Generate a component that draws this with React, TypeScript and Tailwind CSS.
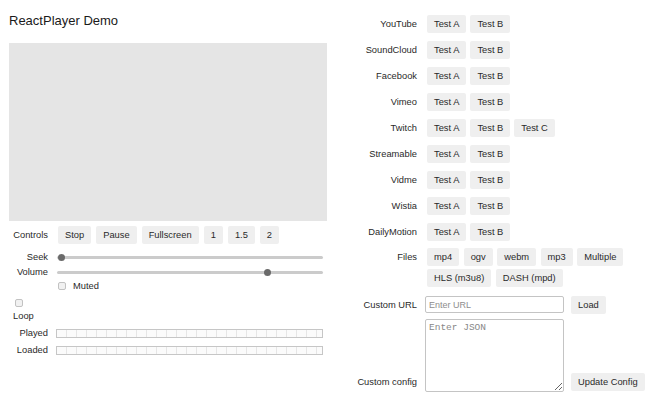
import React from 'react';

const providers: { name: string; tests: string[] }[] = [
  { name: 'YouTube', tests: ['Test A', 'Test B'] },
  { name: 'SoundCloud', tests: ['Test A', 'Test B'] },
  { name: 'Facebook', tests: ['Test A', 'Test B'] },
  { name: 'Vimeo', tests: ['Test A', 'Test B'] },
  { name: 'Twitch', tests: ['Test A', 'Test B', 'Test C'] },
  { name: 'Streamable', tests: ['Test A', 'Test B'] },
  { name: 'Vidme', tests: ['Test A', 'Test B'] },
  { name: 'Wistia', tests: ['Test A', 'Test B'] },
  { name: 'DailyMotion', tests: ['Test A', 'Test B'] },
];

const files = ['mp4', 'ogv', 'webm', 'mp3', 'Multiple', 'HLS (m3u8)', 'DASH (mpd)'];

function Btn({ children }: { children: React.ReactNode }) {
  return (
    <button className="h-[18px] px-[7px] rounded-[2px] bg-[#efefef] text-[#2a2a2a] text-[9.33px] leading-[18px] whitespace-nowrap">
      {children}
    </button>
  );
}

function Checkbox() {
  return <span className="block w-[8px] h-[8px] rounded-[2px] border border-[#c2c2c2] bg-[#f1f1f1]" />;
}

function Slider({ value }: { value: number }) {
  return (
    <div className="relative w-[266px] h-[7px] flex items-center">
      <div className="w-full h-[3px] rounded-full bg-[#cbcbcb]" />
      <span
        className="absolute top-0 w-[7px] h-[7px] rounded-full bg-[#6a6a6a]"
        style={{ left: `${1 + value * 257}px` }}
      />
    </div>
  );
}

function Progress() {
  return (
    <div className="w-[267px] h-[9px] border border-[#c6c6c6] bg-[repeating-linear-gradient(90deg,#fbfbfb_0px,#fbfbfb_9px,#e6e6e6_9px,#e6e6e6_10px)]" />
  );
}

function LeftLabel({ children }: { children: React.ReactNode }) {
  return <div className="w-[39px] shrink-0 text-right">{children}</div>;
}

export default function App() {
  return (
    <div className="w-[654px] h-[405px] bg-white flex pl-[9px] font-['Liberation_Sans',Arial,sans-serif] text-[9.33px] text-[#2a2a2a] leading-[12px]">
      <section className="w-[318px] shrink-0">
        <h1 className="pt-[13px] h-[43px] text-[13px] leading-[15px] text-[#1a1a1a]">ReactPlayer Demo</h1>
        <div className="h-[178px] bg-[#e5e5e5]" />

        <div className="mt-[5px] h-[18px] flex items-center gap-[9px]">
          <LeftLabel>Controls</LeftLabel>
          <div className="flex gap-[5px] ml-[1px]">
            <Btn>Stop</Btn>
            <Btn>Pause</Btn>
            <Btn>Fullscreen</Btn>
            <Btn>1</Btn>
            <Btn>1.5</Btn>
            <Btn>2</Btn>
          </div>
        </div>

        <div className="mt-[6px] h-[14px] flex items-center gap-[9px]">
          <LeftLabel>Seek</LeftLabel>
          <Slider value={0} />
        </div>
        <div className="h-[16px] flex items-center gap-[9px]">
          <LeftLabel>Volume</LeftLabel>
          <Slider value={0.8} />
        </div>
        <div className="h-[12px] flex items-center gap-[7px] pl-[49px]">
          <Checkbox />
          <span>Muted</span>
        </div>

        <div className="mt-[7px] ml-[6px]">
          <Checkbox />
        </div>
        <div className="mt-[3px] pl-[4px] leading-[12px]">Loop</div>

        <div className="mt-[4px] h-[14px] flex items-center gap-[8px]">
          <LeftLabel>Played</LeftLabel>
          <Progress />
        </div>
        <div className="mt-[3px] h-[14px] flex items-center gap-[8px]">
          <LeftLabel>Loaded</LeftLabel>
          <Progress />
        </div>
      </section>

      <section className="ml-[28px] pt-[15px] flex flex-col">
        <div className="flex flex-col gap-[8px]">
          {providers.map((p) => (
            <div key={p.name} className="h-[18px] flex items-center gap-[10px]">
              <div className="w-[62px] text-right">{p.name}</div>
              <div className="flex gap-[4px]">
                {p.tests.map((t) => (
                  <Btn key={t}>{t}</Btn>
                ))}
              </div>
            </div>
          ))}
        </div>

        <div className="mt-[7px] flex items-start gap-[10px]">
          <div className="w-[62px] h-[18px] flex items-center justify-end">Files</div>
          <div className="w-[205px] flex flex-wrap gap-x-[4.5px] gap-y-[3px]">
            {files.map((f) => (
              <Btn key={f}>{f}</Btn>
            ))}
          </div>
        </div>

        <div className="mt-[9px] h-[17px] flex items-center gap-[8px]">
          <div className="w-[62px] text-right">Custom URL</div>
          <input
            placeholder="Enter URL"
            className="w-[139px] h-[17px] px-[3px] border border-[#c4c4c4] rounded-[2px] text-[9px] placeholder:text-[#8e8e8e] outline-none"
          />
          <div className="ml-[-1px] flex">
            <Btn>Load</Btn>
          </div>
        </div>

        <div className="mt-[6px] flex items-end gap-[8px]">
          <div className="w-[62px] text-right mb-[4px]">Custom config</div>
          <textarea
            placeholder="Enter JSON"
            className="w-[139px] h-[73px] px-[3px] py-[2px] border border-[#c4c4c4] rounded-[2px] text-[9.5px] leading-[12px] font-['Liberation_Mono',monospace] placeholder:text-[#888] outline-none resize"
          />
          <div className="ml-[-1px] mb-[1px] flex">
            <Btn>Update Config</Btn>
          </div>
        </div>
      </section>
    </div>
  );
}
